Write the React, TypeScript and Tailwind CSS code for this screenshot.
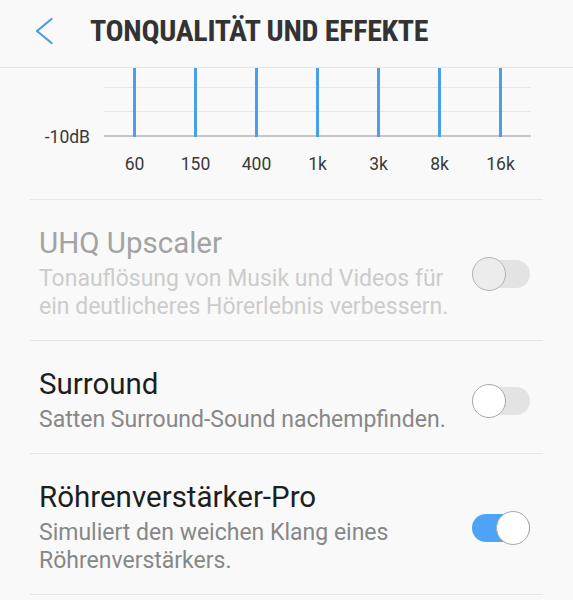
const BANDS = ["60", "150", "400", "1k", "3k", "8k", "16k"];

const SETTINGS = [
  {
    title: "UHQ Upscaler",
    body: ["Tonauflösung von Musik und Videos für", "ein deutlicheres Hörerlebnis verbessern."],
    on: false,
    disabled: true,
  },
  {
    title: "Surround",
    body: ["Satten Surround-Sound nachempfinden."],
    on: false,
    disabled: false,
  },
  {
    title: "Röhrenverstärker-Pro",
    body: ["Simuliert den weichen Klang eines", "Röhrenverstärkers."],
    on: true,
    disabled: false,
  },
];

function Toggle({ on, disabled }: { on: boolean; disabled: boolean }) {
  return (
    <div
      className={`flex h-[28px] w-[58px] shrink-0 items-center rounded-full ${
        on ? "justify-end bg-[#4ea3f5]" : "justify-start bg-[#e3e3e3]"
      }`}
    >
      <div
        className={`size-[34px] shrink-0 rounded-full border-[1.5px] ${
          disabled ? "border-[#b4b4b4] bg-[#ececec]" : "border-[#a8a8a8] bg-white"
        }`}
      />
    </div>
  );
}

export default function App() {
  return (
    <div className="min-h-[600px] w-[573px] overflow-hidden bg-[#f9f9f9] font-['Roboto',sans-serif]">
      <header className="flex h-[68px] items-center border-b border-[#e6e6e6] pb-[6px] pl-[35px]">
        <svg width="18" height="26" viewBox="0 0 18 26" fill="none" className="shrink-0">
          <polyline
            points="16.5,1 2,13 16.5,25"
            stroke="#4a9be8"
            strokeWidth="2.2"
            strokeLinecap="round"
            strokeLinejoin="round"
          />
        </svg>
        <h1 className="ml-[37px] text-[30px] font-bold uppercase leading-none tracking-[-0.3px] text-[#333] [font-stretch:condensed]">
          Tonqualität und Effekte
        </h1>
      </header>

      <section className="mx-[30px] border-b border-[#e6e6e6] pb-[25px]">
        <div className="flex h-[69px]">
          <div className="w-[74px] shrink-0 pr-[14px] pt-[59px] text-right text-[17.5px] leading-5 text-[#3a3a3a]">
            -10dB
          </div>
          <div className="relative w-[427px]">
            <div className="h-[20px] border-b border-[#e6e6e6]" />
            <div className="h-[24px] border-b border-[#e6e6e6]" />
            <div className="h-[25px] border-b-2 border-[#c6c6c6]" />
            <div className="absolute inset-0 flex">
              {BANDS.map((b) => (
                <div key={b} className="flex w-[61px] justify-center">
                  <div className="h-full w-[3px] bg-[#4a9fe9]" />
                </div>
              ))}
            </div>
          </div>
        </div>
        <div className="mt-[17px] flex pl-[74px]">
          {BANDS.map((b) => (
            <div key={b} className="w-[61px] text-center text-[17.5px] leading-5 text-[#3a3a3a]">
              {b}
            </div>
          ))}
        </div>
      </section>

      {SETTINGS.map((s) => (
        <div
          key={s.title}
          className="mx-[30px] flex items-center border-b border-[#e6e6e6] pb-[19px] pl-[9px] pr-[13px] pt-[27px]"
        >
          <div className="flex-1">
            <div
              className={`text-[29.5px] leading-[32px] ${s.disabled ? "text-[#a3a3a3]" : "text-[#1e1e1e]"}`}
            >
              {s.title}
            </div>
            <div
              className={`mt-[6px] text-[23px] leading-[28px] ${s.disabled ? "text-[#cccccc]" : "text-[#878787]"}`}
            >
              {s.body.map((l) => (
                <div key={l}>{l}</div>
              ))}
            </div>
          </div>
          <Toggle on={s.on} disabled={s.disabled} />
        </div>
      ))}
    </div>
  );
}
